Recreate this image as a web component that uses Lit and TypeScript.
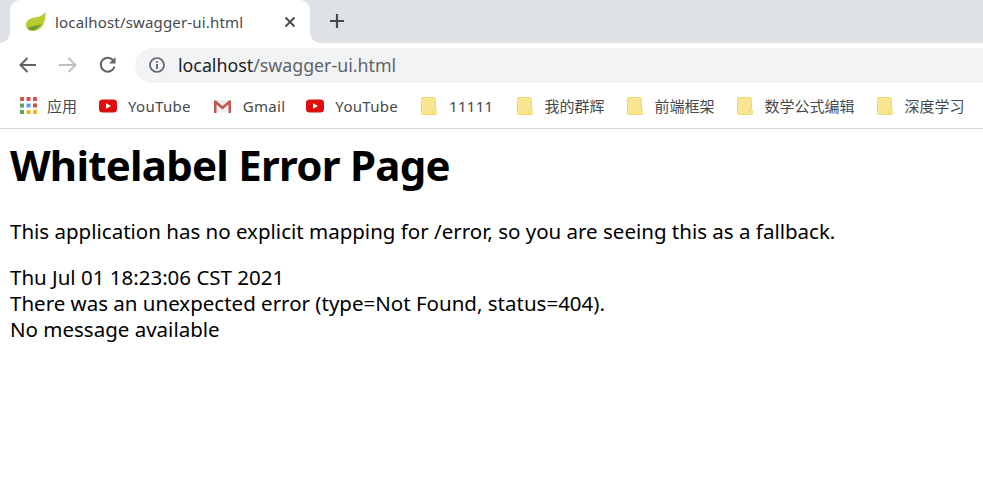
import { LitElement, html, css, svg } from "lit";
import { customElement } from "lit/decorators.js";

const folder = svg`<svg class="ic" width="16" height="18" viewBox="0 0 16 18"><path d="M1.500 0.500H12.500Q14.500 .5 14.500 2.500V17.500H2Q.5 17.500 .5 16V1.500Q.5 .5 1.500 .5Z" fill="#f9e690" stroke="#ecd870"/><path d="M12.500 17.500V13.500Q12.500 12 13.800 12T15.500 13.500V17.500Z" fill="#f9e690" stroke="#ecd870" stroke-width=".8"/></svg>`;
const yt = svg`<svg class="ic" width="18" height="14" viewBox="0 0 18 14"><rect width="18" height="13" y=".5" rx="3.5" fill="#df0d0d"/><path d="M7 4.200L12 7L7 9.800Z" fill="#fff"/></svg>`;
const gmail = svg`<svg class="ic" width="19" height="14" viewBox="0 0 19 14"><rect x="1" y="1" width="17" height="12.500" fill="#efefef"/><path d="M1 14V1.500H3L9.500 7L16 1.500H18V14H15.500V5.500L9.500 10.500L3.500 5.500V14Z" fill="#bd5b51"/></svg>`;
const apps = svg`<svg class="ic" width="17" height="17" viewBox="0 0 17 17">
${[["#d9534a","#d9534a","#d9534a"],["#5da35f","#5c9cf5","#d9534a"],["#5da35f","#efb31c","#efb31c"]].map((r,y)=>r.map((c,x)=>svg`<rect x=${x*6.500} y=${y*6.500} width="4" height="4" fill=${c}/>`))}</svg>`;

@customElement("app-root")
export class AppRoot extends LitElement {
  static styles = css`
    :host { display: block; width: 983px; height: 479px; overflow: hidden; background: #fff; font-family: "Noto Sans", "Noto Sans CJK SC", sans-serif; }
    .strip { height: 43px; background: #dee1e6; display: flex; align-items: flex-start; padding-left: 10px; }
    .tab { position: relative; width: 300px; height: 43px; background: #fff; border-radius: 10px 10px 0 0; display: flex; align-items: center; box-sizing: border-box; padding: 0 14px 0 15px; }
    .tab::before, .tab::after { content: ""; position: absolute; bottom: 0; width: 10px; height: 10px; }
    .tab::before { left: -10px; background: radial-gradient(circle at 0 0, #dee1e6 9.500px, #fff 10px); }
    .tab::after { right: -10px; background: radial-gradient(circle at 100% 0, #dee1e6 9.500px, #fff 10px); }
    .tab-title { flex: 1; margin-left: 9px; font-size: 15px; letter-spacing: 0.17px; color: #45484d; white-space: nowrap; }
    .close { display: block; }
    .plus { display: block; margin: 13px 0 0 19px; }
    .toolbar { height: 47px; display: flex; align-items: center; padding: 0 0 3px 17px; box-sizing: border-box; }
    .nav { display: block; flex: none; }
    .back { margin-right: 20px; }
    .fwd { margin-right: 21px; }
    .reload { margin-right: 17px; }
    .omni { flex: 1; height: 35px; background: #f1f3f4; border-radius: 18px 0 0 18px; display: flex; align-items: center; padding-left: 14px; font-size: 17.800px; color: #5f6368; }
    .omni svg { margin-right: 13px; }
    .omni b { font-weight: 400; color: #202124; }
    .bookmarks { height: 31px; padding: 0 0 7px 20px; border-bottom: 1px solid #d6d7d9; display: flex; align-items: center; font-size: 15px; color: #45484d; white-space: nowrap; }
    .bm { display: flex; align-items: center; flex: none; }
    .bm .ic { flex: none; display: block; }
    .lat { letter-spacing: 0.3px; }
    .content { color: #000; padding: 0 10px; }
    h1 { margin: 9px 0 0; font-size: 42px; line-height: 54px; font-weight: 700; letter-spacing: -0.75px; white-space: nowrap; }
    p { margin: 0; font-size: 20.500px; line-height: 26px; white-space: nowrap; }
    .lead { margin-top: 26px; }
    .meta { margin-top: 20px; }
  `;

  private bm(icon: unknown, label: string, left: number, gap: number) {
    const latin = /^[\x00-\x7f]+$/.test(label);
    return html`<div class="bm" style="margin-left:${left}px">${icon}<span class=${latin ? "lat" : ""} style="margin-left:${gap}px">${label}</span></div>`;
  }

  render() {
    return html`
      <div class="strip">
        <div class="tab">
          <svg width="21" height="21" viewBox="0 0 21 21"><path d="M20.500 0.500C20.500 5 20.500 10 18 14C15.500 18 11 20.500 6.500 20C3 19.500 0.500 17 1 13C1.500 9 5.500 7 9.500 6.500C14 6 18 4.500 20.500 0.500Z" fill="#b6cc2f"/><path d="M2.500 17.500C6 14.500 11 15.500 16.500 13C14 17 9.500 19.500 6.500 19C4.800 18.800 3.400 18.300 2.500 17.500Z" fill="#6d9a3a"/></svg>
          <span class="tab-title">localhost/swagger-ui.html</span>
          <svg class="close" width="12" height="12" viewBox="0 0 12 12"><path d="M1.500 1.500L10.500 10.500M10.500 1.500L1.500 10.500" stroke="#45484d" stroke-width="1.800"/></svg>
        </div>
        <svg class="plus" width="16" height="16" viewBox="0 0 16 16"><path d="M8 1V15M1 8H15" stroke="#45484d" stroke-width="2.200"/></svg>
      </div>
      <div class="toolbar">
        <svg class="nav back" width="20" height="18" viewBox="0 0 20 18"><path d="M19 9H4M10.500 2L3.500 9L10.500 16" fill="none" stroke="#5f6368" stroke-width="2"/></svg>
        <svg class="nav fwd" width="20" height="18" viewBox="0 0 20 18"><path d="M2 9H18M11.500 2L18.500 9L11.500 16" fill="none" stroke="#bdc1c6" stroke-width="2"/></svg>
        <svg class="nav reload" width="20" height="20" viewBox="0 0 20 20"><path d="M16.500 11.500A7 7 0 1 1 15 5" fill="none" stroke="#5f6368" stroke-width="2"/><path d="M17.500 2V8.500H11Z" fill="#5f6368"/></svg>
        <div class="omni">
          <svg width="16" height="16" viewBox="0 0 16 16"><circle cx="8" cy="8" r="7" fill="none" stroke="#5f6368" stroke-width="1.700"/><path d="M8 7V12M8 4V5.800" stroke="#5f6368" stroke-width="1.800"/></svg>
          <span><b>localhost</b>/swagger-ui.html</span>
        </div>
      </div>
      <div class="bookmarks">
        ${this.bm(apps, "应用", 0, 10)}
        ${this.bm(yt, "YouTube", 22, 11)}
        ${this.bm(gmail, "Gmail", 22, 11)}
        ${this.bm(yt, "YouTube", 21, 11)}
        ${this.bm(folder, "11111", 23, 12)}
        ${this.bm(folder, "我的群辉", 23, 12)}
        ${this.bm(folder, "前端框架", 22, 12)}
        ${this.bm(folder, "数学公式编辑", 22, 12)}
        ${this.bm(folder, "深度学习", 22, 12)}
      </div>
      <div class="content">
        <h1>Whitelabel Error Page</h1>
        <p class="lead">This application has no explicit mapping for /error, so you are seeing this as a fallback.</p>
        <p class="meta">Thu Jul 01 18:23:06 CST 2021</p>
        <p>There was an unexpected error (type=Not Found, status=404).</p>
        <p>No message available</p>
      </div>
    `;
  }
}
